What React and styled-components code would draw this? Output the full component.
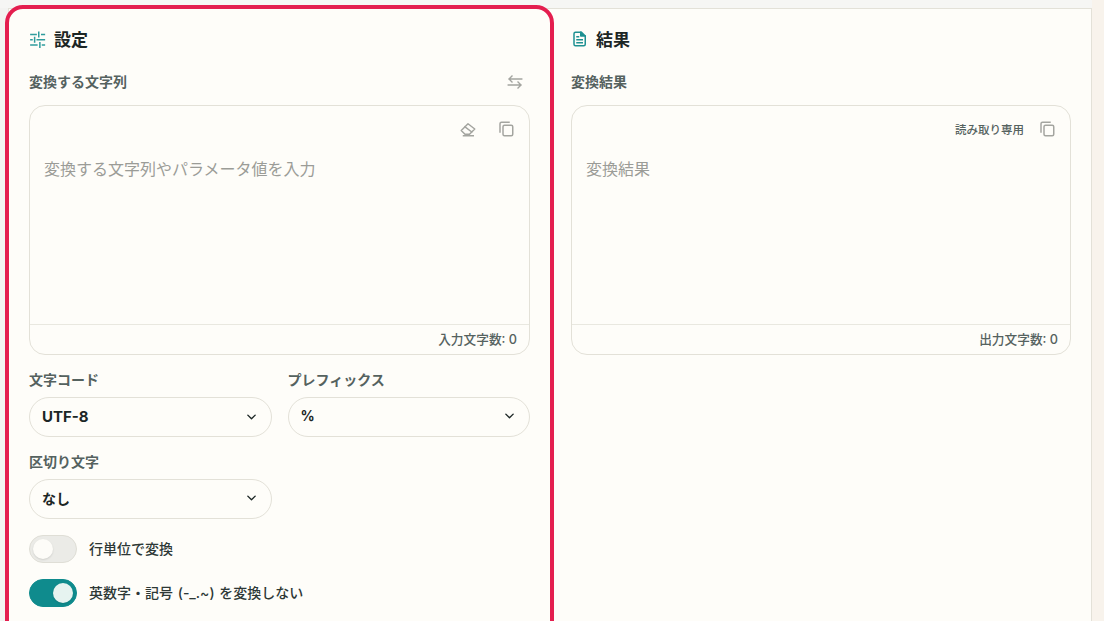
import React, { useState } from 'react';
import styled, { createGlobalStyle } from 'styled-components';

const GlobalStyle = createGlobalStyle`
  html, body {
    margin: 0;
    height: 100%;
    background: #f8f3ec;
  }
  * { box-sizing: border-box; }
  body {
    font-family: Inter, "Noto Sans CJK JP", sans-serif;
    color: #1c2625;
  }
`;

const Page = styled.div`
  height: 621px;
  overflow: hidden;
  background: linear-gradient(90deg, #f3f3f1 0 8px, #f8f3ec 8px);
`;

const Top = styled.div`
  height: 8px;
  width: 1092px;
  background: #f6f6f4;
`;

const Main = styled.main`
  display: grid;
  grid-template-columns: 541px 541px;
  width: 1084px;
  height: 613px;
  margin-left: 8px;
  background: #fefdf9;
  border: 1px solid #e3e1d8;
  border-bottom: 0;
`;

const Card = styled.section`
  padding: 19px 20px 0 ${p => (p.$right ? 21 : 20)}px;
  height: 640px;
  border-radius: 14px;
  outline: ${p => (p.$active ? '4px solid #e41e4f' : 'none')};
  position: relative;
  z-index: ${p => (p.$active ? 1 : 0)};
`;

const Title = styled.h2`
  display: flex;
  align-items: center;
  gap: 8px;
  height: 22px;
  margin: 0 0 20px;
  font-size: 17px;
  font-weight: 700;
  color: #1c2625;
`;

const TitleText = styled.span`
  padding-bottom: 2px;
  margin-left: -1px;
`;

const LabelRow = styled.div`
  display: flex;
  justify-content: space-between;
  align-items: center;
  height: 24px;
  margin-bottom: 11px;
`;

const Label = styled.label`
  display: block;
  font-size: 14px;
  line-height: 20px;
  font-weight: 700;
  color: #55625f;
`;

const IconButton = styled.button`
  display: flex;
  align-items: center;
  justify-content: center;
  width: 22px;
  height: 22px;
  padding: 0;
  border: 0;
  background: none;
  color: #a4a5a0;
`;

const SwapButton = styled(IconButton)`
  margin-right: 4px;
`;

const Editor = styled.div`
  display: flex;
  flex-direction: column;
  height: 250px;
  border: 1px solid #e3e1d8;
  border-radius: 16px;
  overflow: hidden;
`;

const EditorTools = styled.div`
  display: flex;
  justify-content: flex-end;
  align-items: center;
  gap: 16px;
  height: 24px;
  margin-top: 11px;
  padding-right: 12px;
`;

const ReadOnly = styled.span`
  margin-right: -4px;
  font-size: 11.5px;
  font-weight: 500;
  color: #55625f;
`;

const Input = styled.textarea`
  flex: 1;
  display: block;
  width: 100%;
  padding: 16px 14px 0;
  border: 0;
  outline: 0;
  resize: none;
  background: transparent;
  font: 400 16px/24px Inter, "Noto Sans CJK JP", sans-serif;
  &::placeholder {
    color: #9b9c97;
    opacity: 1;
  }
`;

const EditorFooter = styled.div`
  display: flex;
  justify-content: flex-end;
  align-items: center;
  height: 30px;
  padding: 0 12px 2px 0;
  border-top: 1px solid #e9e8e0;
  font-size: 12.7px;
  font-weight: 500;
  color: #55625f;
`;

const FieldGrid = styled.div`
  display: grid;
  grid-template-columns: 1fr 1fr;
  gap: 15px 16px;
  margin-top: 15px;
`;

const Field = styled.div`
  display: flex;
  flex-direction: column;
  gap: 7px;
`;

const Select = styled.button`
  display: flex;
  align-items: center;
  justify-content: space-between;
  width: 100%;
  height: 40px;
  padding: 0 14px ${p => (p.$size ? 2 : 3)}px 12px;
  border: 1px solid #e3e1d8;
  border-radius: 20px;
  background: #fefdf9;
  font: 700 ${p => p.$size || 14}px Inter, "Noto Sans CJK JP", sans-serif;
  color: #1c2625;
`;

const ToggleRow = styled.div`
  display: flex;
  align-items: center;
  gap: 12px;
  height: 28px;
  margin-top: 16px;
  font-size: 14px;
  font-weight: 500;
  word-spacing: 1px;
  color: #2d3836;
`;

const ToggleText = styled.span`
  padding-bottom: 2px;
`;

const Track = styled.button`
  display: flex;
  align-items: center;
  justify-content: ${p => (p.$on ? 'flex-end' : 'flex-start')};
  width: 48px;
  height: 28px;
  padding: 0 3px;
  border: 1px solid ${p => (p.$on ? '#0f8b8d' : '#dfded6')};
  border-radius: 14px;
  background: ${p => (p.$on ? '#0f8b8d' : '#ebebe7')};
`;

const Knob = styled.span`
  width: 20px;
  height: 20px;
  border-radius: 50%;
  background: ${p => (p.$on ? '#e6f3f0' : '#fdfcf8')};
  box-shadow: 0 1px 2px rgba(0, 0, 0, 0.12);
`;

const Icon = ({ size = 18, color = 'currentColor', width = 2, children }) => (
  <svg width={size} height={size} viewBox="0 0 24 24" fill="none" stroke={color} strokeWidth={width} strokeLinecap="square" strokeLinejoin="round">
    {children}
  </svg>
);

const TuneIcon = () => (
  <Icon color="#2f9c9d">
    <path d="M2.5 6h7M17 6h3.5M13 3v6M2.5 13h1.5M11 13h9.5M7.5 10v6M2.5 20h8M18 20h2.5M14.5 17v6" />
  </Icon>
);

const FileIcon = () => (
  <Icon color="#1f9192">
    <path d="M4 5a2 2 0 0 1 2-2h8l5 5v11a2 2 0 0 1-2 2H6a2 2 0 0 1-2-2z" />
    <path d="M13 3v5h6" fill="#1f9192" />
    <path d="M8 9h2M8 13h7M8 17h7" />
  </Icon>
);

const EraserIcon = () => (
  <Icon>
    <path d="M3 14 12 5l9 7-7 7H8z" />
    <path d="M8 9l9 7M6 21h13" />
  </Icon>
);

const CopyIcon = () => (
  <Icon>
    <rect x="8" y="7" width="13" height="14" rx="2" />
    <path d="M4 16V5a2 2 0 0 1 2-2h10" />
  </Icon>
);

const SwapIcon = () => (
  <Icon width={1.8}>
    <path d="M21 8H4M8 4 4 8l4 4M3 16h17M16 12l4 4-4 4" />
  </Icon>
);

const Chevron = () => (
  <svg width="11" height="11" viewBox="0 0 12 12" fill="none" stroke="#1c2625" strokeWidth="1.5" strokeLinecap="round" strokeLinejoin="round">
    <path d="M2 4.5 6 8.5l4-4" />
  </svg>
);

function Toggle({ label, initial }) {
  const [on, setOn] = useState(initial);
  return (
    <ToggleRow>
      <Track $on={on} onClick={() => setOn(!on)}>
        <Knob $on={on} />
      </Track>
      <ToggleText>{label}</ToggleText>
    </ToggleRow>
  );
}

export default function App() {
  return (
    <Page>
      <GlobalStyle />
      <Top />
      <Main>
        <Card $active>
          <Title><TuneIcon /><TitleText>設定</TitleText></Title>
          <LabelRow>
            <Label>変換する文字列</Label>
            <SwapButton><SwapIcon /></SwapButton>
          </LabelRow>
          <Editor>
            <EditorTools>
              <IconButton><EraserIcon /></IconButton>
              <IconButton><CopyIcon /></IconButton>
            </EditorTools>
            <Input placeholder="変換する文字列やパラメータ値を入力" />
            <EditorFooter>入力文字数: 0</EditorFooter>
          </Editor>
          <FieldGrid>
            <Field>
              <Label>文字コード</Label>
              <Select $size={15}>UTF-8<Chevron /></Select>
            </Field>
            <Field>
              <Label>プレフィックス</Label>
              <Select>%<Chevron /></Select>
            </Field>
            <Field>
              <Label>区切り文字</Label>
              <Select>なし<Chevron /></Select>
            </Field>
          </FieldGrid>
          <Toggle label="行単位で変換" initial={false} />
          <Toggle label="英数字・記号 (-_.~) を変換しない" initial />
        </Card>
        <Card $right>
          <Title><FileIcon /><TitleText>結果</TitleText></Title>
          <LabelRow>
            <Label>変換結果</Label>
          </LabelRow>
          <Editor>
            <EditorTools>
              <ReadOnly>読み取り専用</ReadOnly>
              <IconButton><CopyIcon /></IconButton>
            </EditorTools>
            <Input placeholder="変換結果" readOnly />
            <EditorFooter>出力文字数: 0</EditorFooter>
          </Editor>
        </Card>
      </Main>
    </Page>
  );
}
